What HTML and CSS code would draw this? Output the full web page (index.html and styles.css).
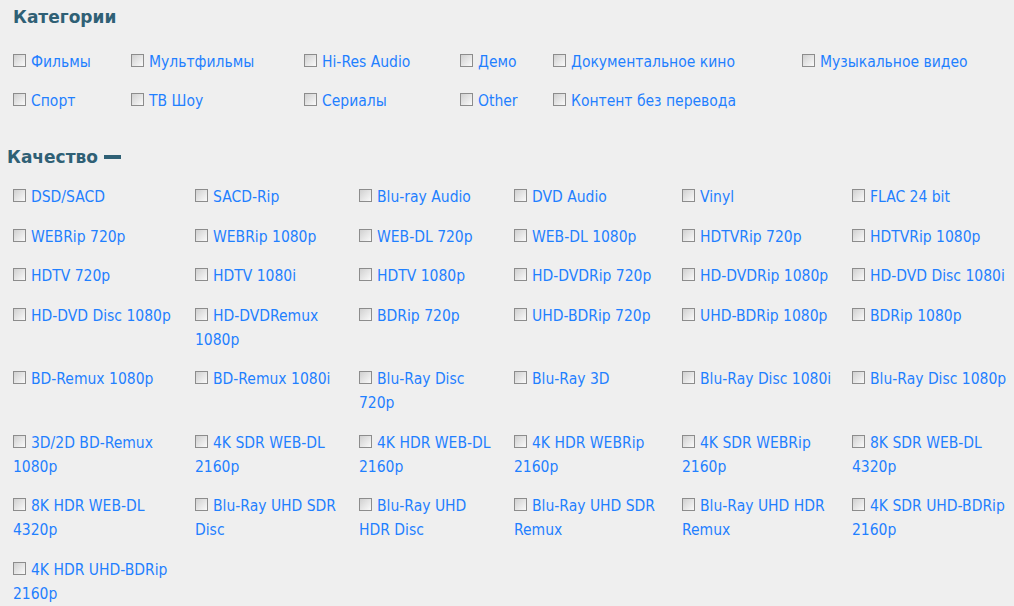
FILE: index.html
```html
<!DOCTYPE html>
<html lang="ru">

<head>
  <meta charset="UTF-8">
  <meta name="viewport" content="width=device-width, initial-scale=1.0">
  <title>Фильтр</title>
  <link rel="stylesheet" href="styles.css">
</head>

<body>

  <div class="filters">
    <h3 class="filter-title cat-title">Категории</h3>
    <div class="cat-grid">
      <label class="opt"><input type="checkbox">Фильмы</label>
      <label class="opt"><input type="checkbox">Мультфильмы</label>
      <label class="opt"><input type="checkbox">Hi-Res Audio</label>
      <label class="opt"><input type="checkbox">Демо</label>
      <label class="opt"><input type="checkbox">Документальное кино</label>
      <label class="opt"><input type="checkbox">Музыкальное видео</label>
      <label class="opt"><input type="checkbox">Спорт</label>
      <label class="opt"><input type="checkbox">ТВ Шоу</label>
      <label class="opt"><input type="checkbox">Сериалы</label>
      <label class="opt"><input type="checkbox">Other</label>
      <label class="opt"><input type="checkbox">Контент без перевода</label>
    </div>

    <h3 class="filter-title quality-title">Качество <span class="toggle"></span></h3>
    <div class="quality-grid">
      <label class="opt"><input type="checkbox">DSD/SACD</label>
      <label class="opt"><input type="checkbox">SACD-Rip</label>
      <label class="opt"><input type="checkbox">Blu-ray Audio</label>
      <label class="opt"><input type="checkbox">DVD Audio</label>
      <label class="opt"><input type="checkbox">Vinyl</label>
      <label class="opt"><input type="checkbox">FLAC 24 bit</label>

      <label class="opt"><input type="checkbox">WEBRip 720p</label>
      <label class="opt"><input type="checkbox">WEBRip 1080p</label>
      <label class="opt"><input type="checkbox">WEB-DL 720p</label>
      <label class="opt"><input type="checkbox">WEB-DL 1080p</label>
      <label class="opt"><input type="checkbox">HDTVRip 720p</label>
      <label class="opt"><input type="checkbox">HDTVRip 1080p</label>

      <label class="opt"><input type="checkbox">HDTV 720p</label>
      <label class="opt"><input type="checkbox">HDTV 1080i</label>
      <label class="opt"><input type="checkbox">HDTV 1080p</label>
      <label class="opt"><input type="checkbox">HD-DVDRip 720p</label>
      <label class="opt"><input type="checkbox">HD-DVDRip 1080p</label>
      <label class="opt"><input type="checkbox">HD-DVD Disc 1080i</label>

      <label class="opt"><input type="checkbox">HD-DVD Disc 1080p</label>
      <label class="opt"><input type="checkbox">HD-DVDRemux 1080p</label>
      <label class="opt"><input type="checkbox">BDRip 720p</label>
      <label class="opt"><input type="checkbox">UHD-BDRip 720p</label>
      <label class="opt"><input type="checkbox">UHD-BDRip 1080p</label>
      <label class="opt"><input type="checkbox">BDRip 1080p</label>

      <label class="opt"><input type="checkbox">BD-Remux 1080p</label>
      <label class="opt"><input type="checkbox">BD-Remux 1080i</label>
      <label class="opt"><input type="checkbox">Blu-Ray Disc 720p</label>
      <label class="opt"><input type="checkbox">Blu-Ray 3D</label>
      <label class="opt"><input type="checkbox">Blu-Ray Disc 1080i</label>
      <label class="opt"><input type="checkbox">Blu-Ray Disc 1080p</label>

      <label class="opt"><input type="checkbox">3D/2D BD-Remux 1080p</label>
      <label class="opt"><input type="checkbox">4K SDR WEB-DL 2160p</label>
      <label class="opt"><input type="checkbox">4K HDR WEB-DL 2160p</label>
      <label class="opt"><input type="checkbox">4K HDR WEBRip 2160p</label>
      <label class="opt"><input type="checkbox">4K SDR WEBRip 2160p</label>
      <label class="opt"><input type="checkbox">8K SDR WEB-DL 4320p</label>

      <label class="opt"><input type="checkbox">8K HDR WEB-DL 4320p</label>
      <label class="opt"><input type="checkbox">Blu-Ray UHD SDR Disc</label>
      <label class="opt"><input type="checkbox">Blu-Ray UHD HDR Disc</label>
      <label class="opt"><input type="checkbox">Blu-Ray UHD SDR Remux</label>
      <label class="opt"><input type="checkbox">Blu-Ray UHD HDR Remux</label>
      <label class="opt"><input type="checkbox">4K SDR UHD-BDRip 2160p</label>

      <label class="opt"><input type="checkbox">4K HDR UHD-BDRip 2160p</label>
    </div>
  </div>

</body>

</html>
```

FILE: styles.css
```css
body {
  margin: 0;
  background: #efefef;
  font-family: "DejaVu Sans", Verdana, sans-serif;
  font-size: 15.5px;
  font-stretch: semi-condensed;
}

.filters {
  padding: 5px 0 0 13px;
}

.filter-title {
  margin: 0;
  font-size: 17px;
  font-weight: bold;
  font-stretch: normal;
  color: #2f6075;
  line-height: 24px;
}

.quality-title {
  margin-left: -6px;
  display: flex;
  align-items: center;
}

.toggle {
  display: inline-block;
  width: 17px;
  height: 4px;
  margin-left: 6px;
  background: #2f6075;
}

.opt {
  color: #1f80ff;
  line-height: 24px;
  cursor: pointer;
}

.opt input {
  appearance: none;
  -webkit-appearance: none;
  width: 13px;
  height: 13px;
  margin: 0 5px 0 0;
  border: 1px solid #8c8c8c;
  background: linear-gradient(135deg, #d0d0d0, #fafafa);
  vertical-align: baseline;
  box-sizing: border-box;
}

.cat-grid {
  display: grid;
  grid-template-columns: 118px 173px 156px 93px 249px 1fr;
  row-gap: 15px;
  margin: 21px 0 32px;
}

.quality-grid {
  display: grid;
  grid-template-columns: 182px 164px 155px 168px 170px 1fr;
  row-gap: 15.5px;
  margin-top: 16px;
}

.quality-grid .opt {
  padding-right: 8px;
}

/* третья колонка уже остальных */
.quality-grid .opt:nth-child(6n+3) {
  padding-right: 18px;
}

.quality-grid .opt:nth-child(6n) {
  padding-right: 0;
}
```
